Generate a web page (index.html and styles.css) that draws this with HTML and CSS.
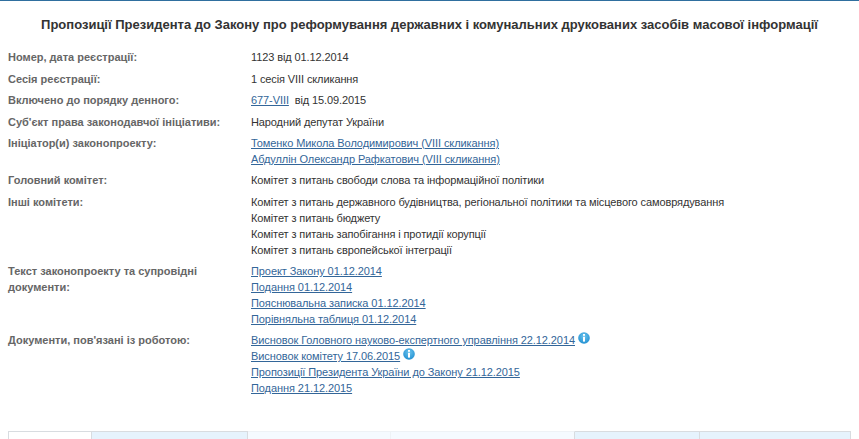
FILE: index.html
```html
<!DOCTYPE html>
<html lang="uk">
<head>
    <meta charset="UTF-8">
    <title>Законопроект 1123</title>
    <link rel="stylesheet" href="styles.css">
</head>
<body>
    <div class="page">
        <h1 class="title">Пропозиції Президента до Закону про реформування державних і комунальних друкованих засобів масової інформації</h1>

        <div class="info">
            <div class="row">
                <div class="label">Номер, дата реєстрації:</div>
                <div class="value"><div class="line">1123 від 01.12.2014</div></div>
            </div>
            <div class="row">
                <div class="label">Сесія реєстрації:</div>
                <div class="value"><div class="line">1 сесія VIII скликання</div></div>
            </div>
            <div class="row">
                <div class="label">Включено до порядку денного:</div>
                <div class="value"><div class="line"><a href="#">677-VIII</a>&nbsp; від 15.09.2015</div></div>
            </div>
            <div class="row">
                <div class="label">Суб'єкт права законодавчої ініціативи:</div>
                <div class="value"><div class="line">Народний депутат України</div></div>
            </div>
            <div class="row">
                <div class="label">Ініціатор(и) законопроекту:</div>
                <div class="value">
                    <div class="line"><a href="#">Томенко Микола Володимирович (VIII скликання)</a></div>
                    <div class="line"><a href="#">Абдуллін Олександр Рафкатович (VIII скликання)</a></div>
                </div>
            </div>
            <div class="row">
                <div class="label">Головний комітет:</div>
                <div class="value"><div class="line">Комітет з питань свободи слова та інформаційної політики</div></div>
            </div>
            <div class="row">
                <div class="label">Інші комітети:</div>
                <div class="value">
                    <div class="line">Комітет з питань державного будівництва, регіональної політики та місцевого самоврядування</div>
                    <div class="line">Комітет з питань бюджету</div>
                    <div class="line">Комітет з питань запобігання і протидії корупції</div>
                    <div class="line">Комітет з питань європейської інтеграції</div>
                </div>
            </div>
            <div class="row">
                <div class="label">Текст законопроекту та супровідні документи:</div>
                <div class="value">
                    <div class="line"><a href="#">Проект Закону 01.12.2014</a></div>
                    <div class="line"><a href="#">Подання 01.12.2014</a></div>
                    <div class="line"><a href="#">Пояснювальна записка 01.12.2014</a></div>
                    <div class="line"><a href="#">Порівняльна таблиця 01.12.2014</a></div>
                </div>
            </div>
            <div class="row">
                <div class="label">Документи, пов'язані із роботою:</div>
                <div class="value">
                    <div class="line"><a href="#">Висновок Головного науково-експертного управління 22.12.2014</a>
                        <svg class="info-icon" viewBox="0 0 12 12"><defs><radialGradient id="ball" cx="50%" cy="35%" r="70%"><stop offset="0" stop-color="#6cc4ee"/><stop offset="1" stop-color="#1c8ccf"/></radialGradient></defs><circle cx="6" cy="6" r="5.8" fill="url(#ball)"/><rect x="5" y="2" width="2" height="1.8" fill="#fff"/><rect x="5" y="4.8" width="2" height="4.8" fill="#fff"/></svg>
                    </div>
                    <div class="line"><a href="#">Висновок комітету 17.06.2015</a>
                        <svg class="info-icon" viewBox="0 0 12 12"><circle cx="6" cy="6" r="5.8" fill="url(#ball)"/><rect x="5" y="2" width="2" height="1.8" fill="#fff"/><rect x="5" y="4.8" width="2" height="4.8" fill="#fff"/></svg>
                    </div>
                    <div class="line"><a href="#">Пропозиції Президента України до Закону 21.12.2015</a></div>
                    <div class="line"><a href="#">Подання 21.12.2015</a></div>
                </div>
            </div>
        </div>

        <!-- вкладки внизу, текст не влазить у вікно -->
        <div class="tabs">
            <div class="tab tab-active"></div>
            <div class="tab tab-blue tab-2"></div>
            <div class="tab tab-light tab-3"></div>
            <div class="tab tab-light tab-4"></div>
            <div class="tab tab-blue tab-5"></div>
            <div class="tab tab-blue tab-6"></div>
        </div>
    </div>
</body>
</html>
```

FILE: styles.css
```css
html, body {
    height: 439px;
    overflow: hidden;
}

body {
    font-family: "Liberation Sans", Arial, sans-serif;
    margin: 0;
    background-color: #ffffff;
    color: #333333;
}

.page {
    border-top: 1px solid #2f6f9f;
    padding: 0 8px;
}

.title {
    margin: 0;
    padding-top: 16px;
    height: 31px;
    font-size: 13px;
    line-height: 16px;
    font-weight: bold;
    text-align: center;
    color: #333333;
}

.info {
    padding-top: 1.4px;
    font-size: 11px;
    line-height: 16px;
}

.row {
    display: flex;
    margin-bottom: 5.38px;
}

.label {
    width: 243px;
    padding-right: 20px;
    box-sizing: border-box;
    font-weight: bold;
    color: #666666;
}

.value {
    flex: 1;
    letter-spacing: -0.11px;
}

.value a {
    color: #336699;
    letter-spacing: -0.08px;
}

.info-icon {
    width: 12px;
    height: 12px;
    vertical-align: 0;
}

.tabs {
    display: flex;
    margin-top: 35px;
}

.tab {
    box-sizing: border-box;
    height: 20px;
    border-top: 1px solid #d8dce0;
    border-right: 1px solid #d8dce0;
}

.tab-active {
    width: 84px;
    border-left: 1px solid #d8dce0;
    background-color: #ffffff;
}

.tab-blue {
    background-color: #e6f3fd;
}

.tab-light {
    background-color: #f5faff;
    border-color: #eef2f6;
}

.tab-2 {
    width: 157px;
}

.tab-3 {
    width: 143px;
}

.tab-4 {
    width: 184px;
    border-right-color: #d8dce0;
}

.tab-5 {
    width: 126px;
}

.tab-6 {
    width: 151px;
}
```
